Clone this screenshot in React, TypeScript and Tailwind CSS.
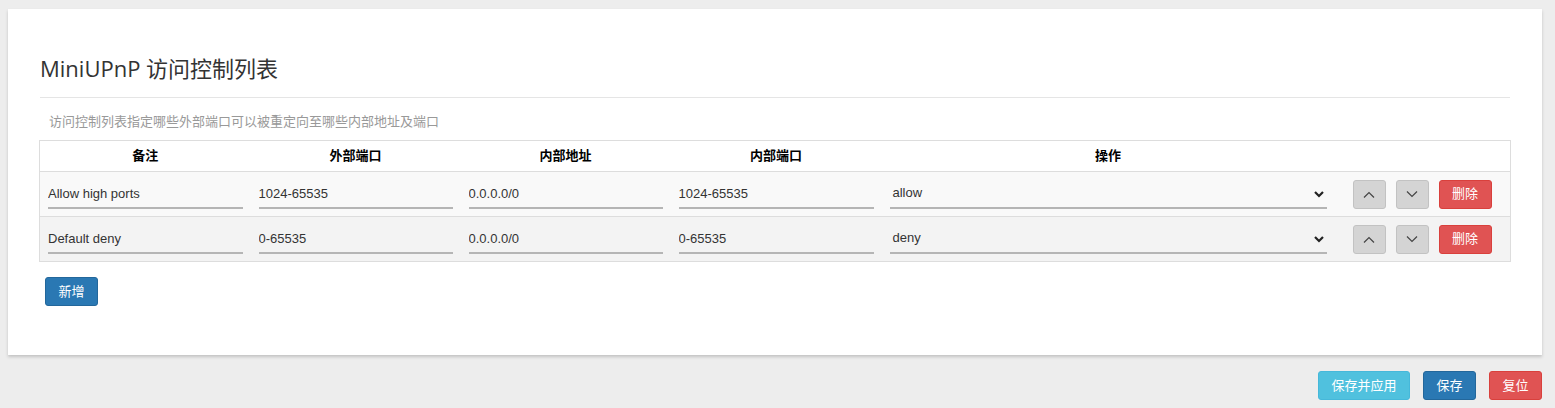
import React from "react";

const CJK = '"Liberation Sans", "Noto Sans CJK SC", sans-serif';

function Chevron({ up }: { up?: boolean }) {
  return (
    <svg width="12" height="7" viewBox="0 0 12 7" fill="none">
      {up ? (
        <path d="M1 6.5 L6 1.5 L11 6.5" stroke="#444" strokeWidth="1.2" />
      ) : (
        <path d="M1 0.5 L6 5.5 L11 0.5" stroke="#444" strokeWidth="1.2" />
      )}
    </svg>
  );
}

function TextInput({ value }: { value: string }) {
  return (
    <input
      readOnly
      value={value}
      className="block w-full h-[30px] bg-transparent border-0 border-b-2 border-[#b5b5b5] p-0 text-[13px] text-[#333] outline-none"
      style={{ fontFamily: CJK }}
    />
  );
}

function SelectBox({ value }: { value: string }) {
  return (
    <div className="relative h-[30px] border-b-2 border-[#b5b5b5] flex items-center pl-[3px]">
      <span className="text-[13px] text-[#333]" style={{ fontFamily: CJK }}>
        {value}
      </span>
      <svg className="absolute right-[3px] top-[12px]" width="10" height="7" viewBox="0 0 10 7">
        <path d="M1 1 L5 5 L9 1" stroke="#222" strokeWidth="2.2" fill="none" />
      </svg>
    </div>
  );
}

const td = "border-y border-[#dddddd] px-[8px] py-0";

function Row({ cells, bg }: { cells: string[]; bg: string }) {
  return (
    <tr className={bg}>
      <td className={`${td} h-[45px]`}>
        <TextInput value={cells[0]} />
      </td>
      <td className={td}>
        <TextInput value={cells[1]} />
      </td>
      <td className={td}>
        <TextInput value={cells[2]} />
      </td>
      <td className={td}>
        <TextInput value={cells[3]} />
      </td>
      <td className={td}>
        <SelectBox value={cells[4]} />
      </td>
      <td className="border-y border-[#dddddd] pl-[18px] pr-0">
        <div className="flex items-center gap-[10px]">
          <button className="w-[33px] h-[29px] rounded-[3px] bg-[#d4d4d4] border border-[#c2c2c2] flex items-center justify-center">
            <Chevron up />
          </button>
          <button className="w-[33px] h-[29px] rounded-[3px] bg-[#d4d4d4] border border-[#c2c2c2] flex items-center justify-center">
            <Chevron />
          </button>
          <button
            className="w-[53px] h-[29px] rounded-[3px] bg-[#e05353] border border-[#d9403c] text-white text-[13px]"
            style={{ fontFamily: CJK }}
          >
            删除
          </button>
        </div>
      </td>
    </tr>
  );
}

export default function App() {
  return (
    <div className="min-h-[408px] bg-[#ededed] pt-[9px] pl-[8px] pr-[13px]" style={{ fontFamily: CJK }}>
      <div className="bg-white shadow-[0_2px_3px_rgba(0,0,0,0.18)] h-[346px] pt-[44px] pl-[31px] pr-[32px]">
        <h2
          className="ml-px text-[22px] leading-[30px] text-[#333] font-normal"
          style={{ fontFamily: '"Open Sans", "Noto Sans CJK SC", sans-serif' }}
        >
          MiniUPnP 访问控制列表
        </h2>
        <div className="ml-px mt-[14px] border-t border-[#e5e5e5]" />
        <p className="ml-[10px] mt-[14px] text-[13px] leading-[20px] text-[#999]">
          访问控制列表指定哪些外部端口可以被重定向至哪些内部地址及端口
        </p>
        <table className="mt-[8px] w-[1471px] border-collapse table-fixed border border-[#dddddd]">
          <colgroup>
            <col className="w-[211px]" />
            <col className="w-[210px]" />
            <col className="w-[210px]" />
            <col className="w-[211px]" />
            <col className="w-[453px]" />
            <col className="w-[176px]" />
          </colgroup>
          <thead>
            <tr className="bg-white">
              {["备注", "外部端口", "内部地址", "内部端口", "操作", ""].map((h, i) => (
                <th key={i} className="border-y border-[#dddddd] h-[31px] text-[13px] font-bold text-black text-center p-0">
                  {h}
                </th>
              ))}
            </tr>
          </thead>
          <tbody>
            <Row bg="bg-[#f9f9f9]" cells={["Allow high ports", "1024-65535", "0.0.0.0/0", "1024-65535", "allow"]} />
            <Row bg="bg-[#f3f3f3]" cells={["Default deny", "0-65535", "0.0.0.0/0", "0-65535", "deny"]} />
          </tbody>
        </table>
        <button className="mt-[15px] ml-[6px] w-[53px] h-[29px] rounded-[3px] bg-[#2a78b3] border border-[#23679b] text-white text-[13px]">
          新增
        </button>
      </div>
      <div className="flex justify-end gap-[13px] mt-[16px]">
        <button className="w-[92px] h-[29px] rounded-[3px] bg-[#50c1de] border border-[#46b8da] text-white text-[13px]">
          保存并应用
        </button>
        <button className="w-[53px] h-[29px] rounded-[3px] bg-[#2a78b3] border border-[#23679b] text-white text-[13px]">
          保存
        </button>
        <button className="w-[53px] h-[29px] rounded-[3px] bg-[#e05353] border border-[#d9403c] text-white text-[13px]">
          复位
        </button>
      </div>
    </div>
  );
}
